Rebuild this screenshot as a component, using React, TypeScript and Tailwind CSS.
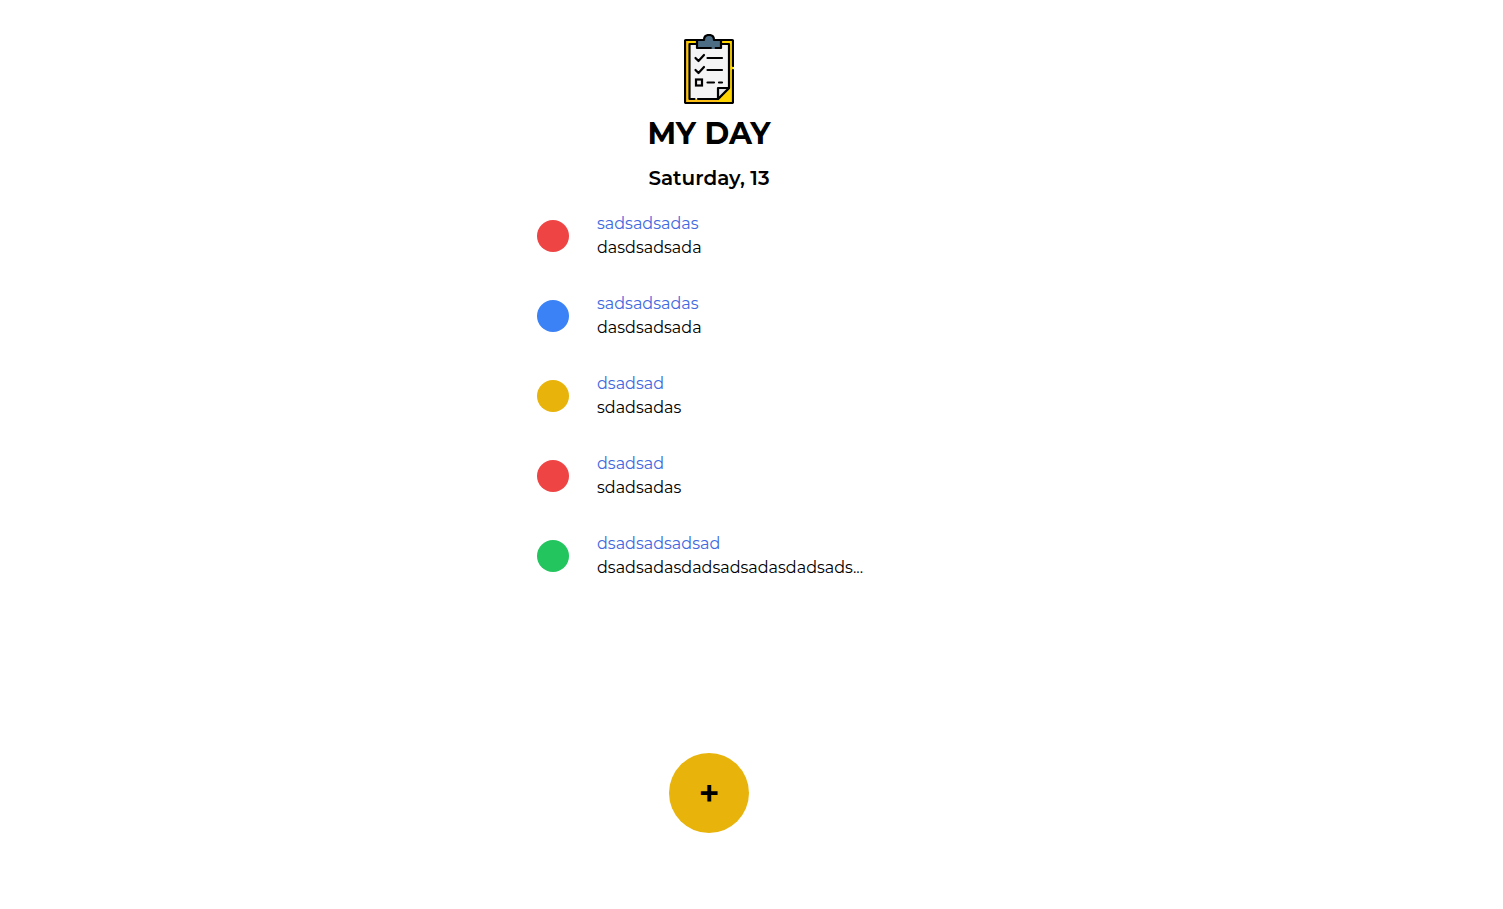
type Task = { id: number; title: string; detail: string; color: string };

const tasks: Task[] = [
  { id: 1, title: "sadsadsadas", detail: "dasdsadsada", color: "bg-[#ef4444]" },
  { id: 2, title: "sadsadsadas", detail: "dasdsadsada", color: "bg-[#3b82f6]" },
  { id: 3, title: "dsadsad", detail: "sdadsadas", color: "bg-[#e8b30a]" },
  { id: 4, title: "dsadsad", detail: "sdadsadas", color: "bg-[#ef4444]" },
  { id: 5, title: "dsadsadsadsad", detail: "dsadsadasdadsadsadasdadsads...", color: "bg-[#22c55e]" },
];

function ClipboardIcon() {
  return (
    <svg viewBox="0 0 50 70" className="h-[70px] w-[50px]" fill="none" stroke="#000" strokeWidth="2.2" strokeLinecap="round" strokeLinejoin="round" aria-hidden="true">
      <rect x="1" y="6" width="48" height="63" rx="1" fill="#ffd400" stroke="none" />
      <path d="M1 6h3v60h29v3H1z" fill="#fcbf18" stroke="none" />
      <path d="M5.500 10.500h39v43L34 65H5.500z" fill="#f4f4f5" stroke="none" />
      <path d="M49 32V7a1 1 0 0 0-1-1H2a1 1 0 0 0-1 1v61a1 1 0 0 0 1 1h46a1 1 0 0 0 1-1V36" />
      <path d="M13 10H5.500v55h5M14 65h20l11-11V10h-8" />
      <path d="M34 65V54h11z" fill="#e4e4e7" />
      <path d="M13 6h7c0-3 2-5 5-5s5 2 5 5h7v8H13z" fill="#4d6d84" />
      <path d="M28.500 14h1.500" stroke="#4d6d84" />
      <path d="m11.500 24 3 3L20 21M23.500 24H38M11.500 36l3 3 5.500-6M23.500 36H38M23.500 48.500H30M35 48.500h3" />
      <rect x="12" y="45.500" width="6" height="6" strokeLinejoin="miter" />
    </svg>
  );
}

export default function App() {
  return (
    <div className="min-h-screen bg-white pr-[85px] font-['Montserrat','Inter',sans-serif] text-black">
      <main className="mx-auto flex min-h-screen w-full max-w-sm flex-col items-center pt-[34px] pb-[76px]">
        <ClipboardIcon />
        <h1 className="mt-3 text-[30px] leading-9 font-bold">MY DAY</h1>
        <h2 className="mt-3 text-[20px] leading-7 font-semibold">Saturday, 13</h2>
        <ul className="mt-5 flex w-full flex-col gap-8 px-5">
          {tasks.map((task) => (
            <li key={task.id} className="flex items-center gap-7">
              <span className={`size-8 shrink-0 rounded-full ${task.color}`} />
              <div className="min-w-0 text-[16px] leading-6 font-normal whitespace-nowrap">
                <h3 className="text-[#4169e1]">{task.title}</h3>
                <p>{task.detail}</p>
              </div>
            </li>
          ))}
        </ul>
        <button type="button" aria-label="Add task" className="mt-auto flex size-20 items-center justify-center rounded-full bg-[#e8b30a] text-[36px] leading-10 font-semibold">
          +
        </button>
      </main>
    </div>
  );
}
